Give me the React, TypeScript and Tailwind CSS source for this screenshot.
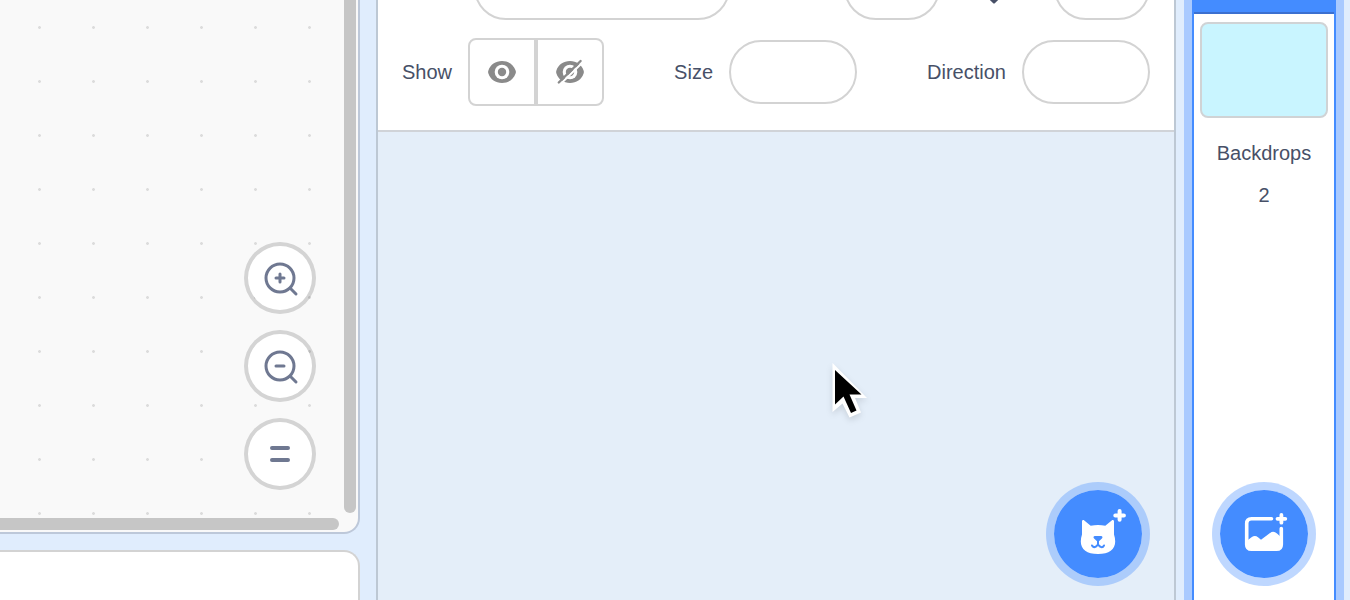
import React from "react";

const labelClass = "text-[20px] leading-[22px] text-[#475067]";
const pillClass =
  "h-16 min-w-0 rounded-full border-2 border-[#d3d3d3] bg-white px-5 text-center text-[20px] text-[#475067] outline-none";
const zoomButtonClass =
  "flex size-[72px] items-center justify-center rounded-full border-4 border-black/15 bg-white bg-clip-padding text-[#6f7891]";
const addButtonClass =
  "absolute bottom-[14px] flex size-[104px] items-center justify-center rounded-full border-8 border-[#448cff]/35 bg-[#448cff] bg-clip-padding text-white";

function GridDots() {
  return (
    <svg className="absolute inset-0 size-full" aria-hidden="true">
      <defs>
        <pattern id="dots" x="38" y="26" width="54" height="54" patternUnits="userSpaceOnUse">
          <path d="M0 0h3v3H0z" fill="#ececec" />
          <path d="M1 0h1v3H1zM0 1h3v1H0z" fill="#dcdcdc" />
        </pattern>
      </defs>
      <rect width="100%" height="100%" fill="url(#dots)" />
    </svg>
  );
}

function Magnifier({ plus }: { plus: boolean }) {
  return (
    <svg width="40" height="40" viewBox="0 0 40 40" fill="none" stroke="currentColor" strokeWidth="3" strokeLinecap="round" aria-hidden="true">
      <circle cx="20" cy="20" r="14" />
      <path d="M30.5 30.5l5.500 5.500" />
      <path d={plus ? "M16 20h8M20 16v8" : "M16 20h8"} />
    </svg>
  );
}

function EyeShape() {
  return (
    <>
      <path d="M16 5C9.500 5 4.500 8.500 2.400 14.500q-.6 1.500 0 3C4.500 23.500 9.500 27 16 27s11.500-3.500 13.600-9.500q.6-1.500 0-3C27.500 8.500 22.500 5 16 5z" fill="#8a8a8a" />
      <circle cx="16" cy="16" r="7.300" fill="#fff" />
      <circle cx="16" cy="16" r="4.200" fill="#8a8a8a" />
    </>
  );
}

function Workspace() {
  return (
    <div className="flex w-[360px] shrink-0 flex-col gap-4">
      <section className="relative flex-1 overflow-hidden rounded-br-2xl border-r-2 border-b-2 border-[#bdc8d9] bg-[#f9f9f9]">
        <GridDots />
        <div className="absolute right-[42px] bottom-[42px] flex flex-col gap-4">
          <button type="button" aria-label="Zoom in" className={zoomButtonClass}>
            <Magnifier plus />
          </button>
          <button type="button" aria-label="Zoom out" className={zoomButtonClass}>
            <Magnifier plus={false} />
          </button>
          <button type="button" aria-label="Reset zoom" className={zoomButtonClass}>
            <svg width="40" height="40" viewBox="0 0 40 40" stroke="currentColor" strokeWidth="4" strokeLinecap="round" aria-hidden="true">
              <path d="M12 14h16M12 26h16" />
            </svg>
          </button>
        </div>
        <div className="absolute top-0 right-[2px] bottom-[19px] w-3 rounded-b-full bg-[#c6c6c6]" />
        <div className="absolute right-[19px] bottom-[2px] left-0 h-3 rounded-r-full bg-[#c6c6c6]" />
      </section>
      <section className="h-[50px] rounded-tr-2xl border-t-2 border-r-2 border-[#d3d3d3] bg-white" />
    </div>
  );
}

function SpriteInfo() {
  return (
    <div className="flex h-[132px] shrink-0 flex-col justify-end gap-[18px] overflow-hidden border-b-2 border-[#d0d3d8] bg-white px-6 pb-6">
      <div className="flex shrink-0 items-center">
        <input aria-label="Sprite name" className={`${pillClass} ml-[72px] w-64`} />
        <div className="flex-1" />
        <input aria-label="Horizontal position" className={`${pillClass} w-24`} />
        <div className="flex w-[114px] justify-center pr-[6px]">
          <svg width="20" height="32" viewBox="0 0 20 32" fill="none" stroke="#475067" strokeWidth="3" strokeLinecap="round" strokeLinejoin="round" aria-hidden="true">
            <path d="M10 3v26M5 8l5-5 5 5M5 25l5 5 5-5z" fill="#475067" />
          </svg>
        </div>
        <input aria-label="Vertical position" className={`${pillClass} w-24`} />
      </div>
      <div className="flex shrink-0 items-center justify-between">
        <div className="flex items-center gap-4">
          <span className={labelClass}>Show</span>
          <div className="flex">
            <button type="button" aria-label="Show sprite" className="flex size-[68px] items-center justify-center rounded-l-lg border-2 border-[#d3d3d3]">
              <svg width="32" height="32" viewBox="0 0 32 32" aria-hidden="true">
                <EyeShape />
              </svg>
            </button>
            <button type="button" aria-label="Hide sprite" className="flex size-[68px] items-center justify-center rounded-r-lg border-2 border-[#d3d3d3]">
              <svg width="32" height="32" viewBox="0 0 32 32" strokeLinecap="round" aria-hidden="true">
                <EyeShape />
                <path d="M6 28.500L29 6" stroke="#fff" strokeWidth="2" />
                <path d="M4.800 26.500L26.600 5" stroke="#8a8a8a" strokeWidth="2.400" />
              </svg>
            </button>
          </div>
        </div>
        <label className="flex items-center gap-4">
          <span className={labelClass}>Size</span>
          <input className={`${pillClass} w-32`} />
        </label>
        <label className="flex items-center gap-4">
          <span className={labelClass}>Direction</span>
          <input className={`${pillClass} w-32`} />
        </label>
      </div>
    </div>
  );
}

function Pointer() {
  return (
    <svg className="absolute top-[362px] left-[452px] drop-shadow-md" width="40" height="60" viewBox="0 0 40 60" aria-hidden="true">
      <path d="M2.500 1v49l10-8.500 7 14 11.500-5-6-14.500h12z" fill="#fff" />
      <path d="M5 8v34.500l8.500-8 7.500 16.500 5.500-2.500-7-16h12z" fill="#000" />
    </svg>
  );
}

function SpritePanel() {
  return (
    <main className="relative ml-4 flex min-w-0 flex-1 flex-col border-x-2 border-[#bdc8d4] bg-[#e4eef9]">
      <SpriteInfo />
      <Pointer />
      <button type="button" aria-label="Choose a sprite" className={`${addButtonClass} right-6`}>
        <svg className="shrink-0" width="60" height="60" viewBox="0 0 60 60" aria-hidden="true">
          <path
            d="M14 17.500c0-1.500 1.300-1.900 2.300-1l6.400 5.300c4.800-1.200 9.800-1.200 14.600 0l6.400-5.300c1-.9 2.300-.5 2.300 1v13c.8 2.200 1.200 4.500 1.200 7 0 8-6.200 12.500-17.200 12.500S12.800 45.500 12.800 37.500c0-2.500.4-4.800 1.200-7z"
            fill="currentColor"
          />
          <path d="M27 32h6c1.700 0 1.900 1.600.9 2.500l-2.400 2.200q-1.500 1.200-3 0l-2.400-2.200c-1-.9-.8-2.500.9-2.500z" fill="#448cff" />
          <path d="M30 36v4.500M24 41.500q1.300 2.500 3.800 1.200l2.200-2.200 2.200 2.200q2.500 1.300 3.800-1.200" fill="none" stroke="#448cff" strokeWidth="2" strokeLinecap="round" strokeLinejoin="round" />
          <path d="M51.600 7.100v8.600M47.300 11.400h8.600" stroke="currentColor" strokeWidth="4" strokeLinecap="round" />
        </svg>
      </button>
    </main>
  );
}

function StagePanel() {
  return (
    <aside className="relative mr-[14px] ml-4 flex w-36 shrink-0 flex-col items-center border-x-2 border-[#448cff] bg-white ring-8 ring-[#a9caff]">
      <div className="h-[14px] w-full shrink-0 border-b-2 border-[#3b70d0] bg-[#448cff]" />
      <div className="mt-2 h-24 w-32 shrink-0 rounded-lg border-2 border-[#d0d3d5] bg-[#c9f5ff]" />
      <div className={`${labelClass} mt-6`}>Backdrops</div>
      <div className={`${labelClass} mt-5`}>2</div>
      <button type="button" aria-label="Choose a backdrop" className={`${addButtonClass} right-[18px]`}>
        <svg className="shrink-0" width="60" height="60" viewBox="0 0 60 60" fill="none" aria-hidden="true">
          <path d="M37.500 14.800H17.500c-3.200 0-4.800 1.800-4.800 4.800v20.800c0 3 1.800 4.800 4.800 4.800h25c3 0 4.800-1.800 4.800-4.800V24.500" stroke="currentColor" strokeWidth="3.600" strokeLinecap="round" />
          <path d="M12 37.500l5.500-4.200q3.500-2.600 6.500 0l3 2.400 9-6.700q3.500-2.500 7 .5l5 4.500v6.400c0 3.500-2 5.600-5.500 5.600h-25c-3.500 0-5.500-2-5.500-5.500z" fill="currentColor" />
          <path d="M47.400 10.900v7.800M43.500 14.800h7.800" stroke="currentColor" strokeWidth="3.800" strokeLinecap="round" />
        </svg>
      </button>
    </aside>
  );
}

export default function App() {
  return (
    <div className="flex h-screen overflow-hidden bg-[#e0edfd] font-['Liberation_Sans',Arial,sans-serif]">
      <Workspace />
      <SpritePanel />
      <StagePanel />
    </div>
  );
}
